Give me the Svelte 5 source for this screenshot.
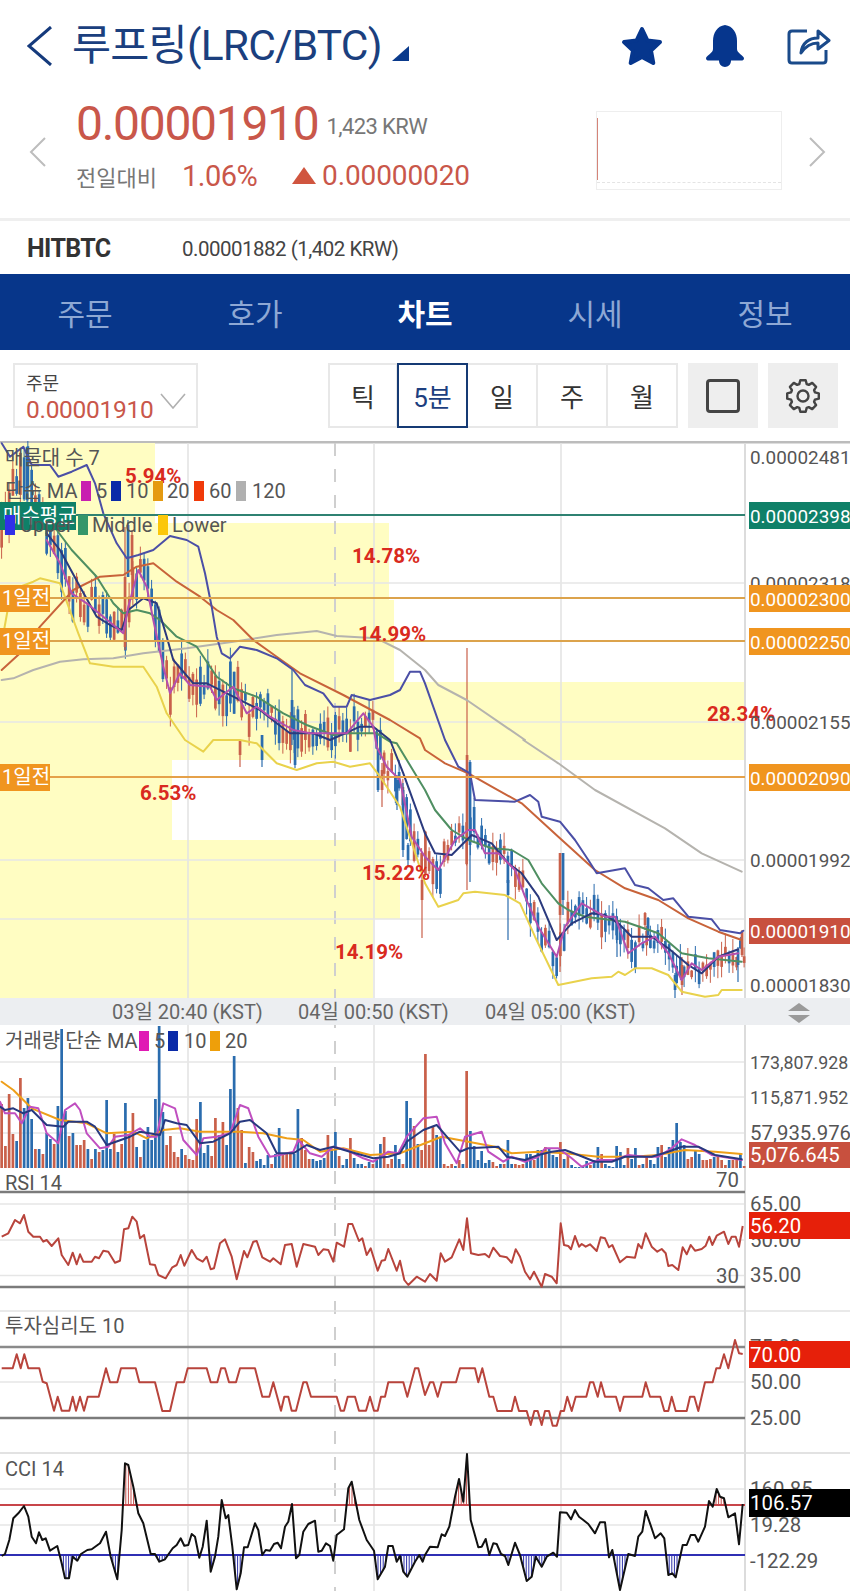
<script>
	const AXIS_X = 745;

	// line data is read off the chart in 3x crop units: flat x,y lists, crop origin ox,oy
	const pts = (arr, ox, oy) => {
		const out = [];
		for (let i = 0; i < arr.length; i += 2) out.push([ox + arr[i] / 3, oy + arr[i + 1] / 3]);
		return out;
	};
	const toD = (p) => p.map((q) => q[0].toFixed(1) + ',' + q[1].toFixed(1)).join(' ');
	const yAt = (p, x) => {
		if (x <= p[0][0]) return p[0][1];
		for (let i = 1; i < p.length; i++) {
			if (x <= p[i][0]) {
				const t = (x - p[i - 1][0]) / (p[i][0] - p[i - 1][0] || 1);
				return p[i - 1][1] + t * (p[i][1] - p[i - 1][1]);
			}
		}
		return p[p.length - 1][1];
	};

	const upper = [
		...pts([5,10,30,50,70,20,95,75,150,75,175,110,215,95,260,75,285,130,310,220,350,310,380,355,415,345,460,330,510,288,560,300,595,320,615,400,635,500,650,590,665,640,690,655,720,620,770,630,830,655,880,690,915,735,970,760,1000,800,1040,800,1055,765,1110,780,1170,765,1200,750,1230,695,1260,695,1275,730], 0, 440),
		...pts([60,0,100,80,135,100,150,180,270,185,315,165,340,185,350,230,405,245,450,300,490,360,515,400,600,385,630,435,670,445,715,480,745,475,790,530,860,538,885,570,945,580,955,572], 425, 740)
	];
	const ma60 = [
		...pts([5,690,60,640,120,560,220,450,300,410,370,405,410,380,460,370,530,425,600,470,650,510,700,540,760,600,830,650,900,700,1030,765,1170,840,1260,895], 0, 440),
		...pts([0,30,60,70,130,100,200,140,290,190,400,290,510,390,600,445,700,480,790,535,880,575,950,600], 425, 740)
	];
	const ma120 = [
		...pts([5,720,40,715,100,690,180,665,250,658,340,655,430,640,560,625,700,605,830,585,950,573,1010,588,1130,595,1200,630,1275,690,1315,735,1400,780,1575,900], 0, 440),
		...pts([295,0,400,70,510,150,720,265,830,340,950,395], 425, 740)
	];
	const middle = [
		...pts([110,220,170,270,215,330,290,410,340,490,370,520,410,510,450,520,480,540,530,590,590,620,650,710,700,745,770,770,850,820,920,855,1000,885,1050,880,1130,880,1170,905], 0, 440),
		...pts([1190,10,1275,150], 0, 740),
		...pts([30,210,80,270,130,300,200,325,260,330,310,360,350,430,400,490,430,510,480,530,600,545,700,580,770,640,850,655,950,665], 425, 740)
	];
	const lower = [
		...pts([5,610,30,470,60,440,100,425,120,415,180,430,235,580,270,670,340,680,430,680,470,740,500,820,555,900], 0, 440),
		...pts([610,35,640,0,720,0,770,10,830,70,890,90,950,70,1000,65,1050,80,1110,70,1140,110,1200,200,1275,430], 0, 740),
		...pts([40,500,100,480,115,460,150,455,240,465,285,490,330,590,400,735,500,715,560,710,580,695,600,705,630,685,680,685,730,705,770,755,840,770,880,765,890,750,950,750], 425, 740)
	];
	const ma10 = [
		...pts([140,280,180,330,240,440,290,530,330,555,365,570,385,510,430,475,470,490,500,590,520,660,580,730,620,730,640,740,700,770,740,790,780,810,830,850,870,880,940,880,990,900,1080,860,1120,860,1170,900], 0, 440),
		...pts([1210,100,1275,280], 0, 740),
		...pts([30,340,80,345,140,285,200,310,250,370,290,400,340,470,395,600,440,550,500,520,540,525,580,550,620,590,680,590,730,625,790,675,830,700,880,650,940,628], 425, 740)
	];
	const ma5 = [
		...pts([140,300,180,370,215,460,260,490,310,530,370,580,385,500,415,390,440,440,460,540,490,680,510,760,540,700,570,735,630,740,650,780,700,740,740,820,770,800,810,830,880,870,930,880,1040,880,1090,820,1120,860], 0, 440),
		...pts([1130,20,1160,80,1200,120,1235,290,1275,350], 0, 740),
		...pts([40,390,90,300,130,270,150,270,180,340,220,340,270,390,300,470,340,560,395,650,420,560,470,490,540,530,570,530,610,640,650,610,690,590,730,640,770,720,800,670,830,690,880,650,940,640], 425, 740)
	];
	const mainLines = [
		{ p: ma120, c: '#b5b3ae' },
		{ p: lower, c: '#e9d24c' },
		{ p: middle, c: '#4f8f62' },
		{ p: ma60, c: '#c8633a' },
		{ p: upper, c: '#4b4fa6' },
		{ p: ma10, c: '#2b3a7e' },
		{ p: ma5, c: '#b34fae' }
	];

	// volume per bar: positive is an up (red) bar, negative a down (blue) bar
	const vols = [64,22,74,34,-27,90,-60,-70,-49,19,-19,14,-35,-29,24,-62,-139,-57,32,-35,23,23,28,-19,9,-19,16,-18,-68,-19,34,-16,24,-65,34,55,-21,11,-28,-41,-28,-69,-142,-56,23,32,16,11,-19,13,9,8,49,-66,-15,-23,12,50,-33,46,-23,-79,-112,60,38,-5,21,16,-7,-9,-3,-13,4,-14,-40,14,14,14,-14,-59,30,18,9,-9,-7,-8,-10,33,-18,-36,12,-3,-9,30,-10,-4,-4,2,-6,4,-8,-24,31,4,9,-23,-9,4,-67,-50,42,-24,18,114,23,41,-33,-31,4,2,4,-2,8,-4,97,-37,-22,-8,-17,-5,-8,6,2,-4,4,-28,-4,4,3,4,-14,-14,8,-18,-18,21,-19,-13,-11,26,-9,13,-3,-1,-1,-1,-7,3,-8,-21,14,-4,-2,-1,-22,-16,-3,20,-9,-20,3,-4,11,-8,-4,-21,23,-11,-21,-28,-45,-26,-23,9,11,-17,-14,8,8,9,-11,13,8,3,-8,8,8,-14,2];
	const barX = (i) => 0.3 + i * 3.75;
	const UP = '#c9604a';
	const DOWN = '#2a6cae';

	const volLines = [
		{ c: '#ee9f1a', p: [...pts([5,185,40,210,95,265,180,300,260,310,320,340,400,335,440,355,490,330,540,325,600,335,720,335,790,340,860,355,910,360,960,395,1030,385,1110,405,1200,400,1275,370], 0, 1020), ...pts([50,350,130,365,210,380,260,400,340,395,420,400,520,410,620,410,700,405,780,390,870,395,950,402], 425, 1020)] },
		{ c: '#c04fc0', p: [...pts([0,245,15,280,45,280,65,310,90,260,115,265,140,340,175,370,195,270,225,250,240,270,260,340,300,385,325,380,345,350,385,345,420,325,450,350,470,350,490,250,525,265,550,360,590,405,610,355,650,350,690,340,720,255,745,265,775,350,810,410,840,405,880,395,895,360,930,400,965,410,1000,380,1040,390,1090,415,1120,425,1165,395,1195,400,1220,350,1270,295], 0, 1020), ...pts([35,290,60,370,95,430,120,350,170,335,190,395,235,425,260,410,300,425,340,410,360,385,400,385,440,415,470,440,520,420,570,420,610,405,660,410,700,410,740,385,770,358,810,375,860,405,950,420], 425, 1020)] },
		{ c: '#27397f', p: [...pts([0,260,15,270,40,265,70,280,95,270,140,315,190,320,205,305,260,305,285,320,320,375,390,350,420,335,480,345,495,300,530,310,560,315,600,370,640,365,690,340,720,305,750,300,800,340,830,400,880,400,920,375,960,390,1000,380,1050,395,1120,415,1165,410,1200,400,1220,365,1270,330], 0, 1020), ...pts([35,315,70,355,105,395,130,385,220,380,245,410,300,420,340,405,380,395,420,390,460,405,510,425,560,425,600,410,680,410,730,395,770,380,820,380,870,405,950,418], 425, 1020)] }
	];

	// candles: colour follows the volume bar, bodies sit around the short average
	let seed = 17;
	const rnd = () => {
		seed = (seed * 16807) % 2147483647;
		return seed / 2147483647;
	};
	const guide = [[0, 545], [12, 490], [27, 478], [46, 540], ...ma5];
	const candles = vols.map((v, i) => {
		const x = barX(i);
		const calm = x > 640 ? 0.7 : 1;
		const mid = yAt(guide, x) + (rnd() - 0.5) * 26 * calm;
		const h = Math.min(42, 5 + Math.abs(v) * 0.4 + rnd() * 14) * calm;
		return { x, top: mid - h / 2, h, wt: mid - h / 2 - rnd() * 14, wb: mid + h / 2 + rnd() * 14, c: v > 0 ? UP : DOWN };
	});
	// the long ones that stand out in the picture
	const bigCandles = [
		[125, 527, 650, 577, 647, UP], [128, 520, 577, 525, 577, DOWN], [132, 530, 600, 535, 575, UP], [27, 447, 510, 447, 500, DOWN],
		[292, 670, 745, 700, 730, DOWN], [467, 648, 890, 755, 830, UP], [470, 760, 882, 762, 845, DOWN], [560, 853, 972, 853, 915, UP],
		[563, 853, 915, 853, 900, DOWN], [422, 873, 938, 880, 900, UP], [508, 857, 940, 880, 895, DOWN], [378, 750, 792, 750, 790, DOWN],
		[382, 763, 807, 770, 790, UP], [397, 775, 810, 780, 805, DOWN], [403, 783, 857, 790, 850, DOWN], [408, 843, 867, 845, 860, DOWN],
		[240, 740, 767, 740, 755, UP], [262, 735, 767, 735, 760, DOWN], [295, 730, 768, 730, 765, DOWN], [738, 947, 982, 950, 965, DOWN],
		[742, 930, 957, 932, 955, UP], [675, 973, 998, 975, 990, DOWN], [682, 957, 995, 965, 985, UP], [617, 917, 957, 920, 940, DOWN],
		[645, 912, 930, 913, 925, UP], [648, 917, 937, 918, 935, DOWN]
	];

	const rsi = [
		...pts([5,650,25,640,45,600,60,610,72,585,85,635,100,650,120,650,130,665,140,660,155,678,175,655,185,705,205,735,218,698,230,733,240,703,250,725,275,725,285,710,297,715,310,692,325,695,345,728,360,722,372,628,385,625,397,590,410,605,420,655,432,645,450,733,465,735,475,765,497,775,517,742,530,735,542,705,553,737,575,690,590,715,608,725,620,710,632,748,642,745,660,670,675,658,695,710,710,778,720,740,732,693,742,712,760,665,770,663,787,712,810,725,820,715,842,733,855,675,875,672,890,740,910,672,945,680,955,705,970,688,985,690,1000,725,1010,668,1032,680,1045,612,1057,612,1077,663,1087,655,1100,705,1112,685,1133,752,1145,722,1155,720,1165,687,1190,752,1200,722,1213,780,1225,795,1250,770,1275,785], 0, 1020),
		...pts([15,762,35,782,47,700,60,725,80,712,103,658,115,690,126,595,138,700,160,705,180,702,192,712,205,683,225,708,245,712,260,728,272,688,285,710,300,755,315,778,327,755,350,800,360,762,380,770,395,790,407,610,417,675,430,678,438,688,450,648,462,680,470,672,482,680,495,673,515,693,527,652,540,655,552,682,562,675,585,727,605,710,630,713,640,672,650,685,662,640,680,680,697,695,710,687,722,700,730,738,742,735,760,750,773,682,785,703,797,675,810,692,830,687,842,677,853,650,862,675,875,647,897,635,910,672,920,650,932,650,942,680,953,618], 425, 1020)
	];
	const psych = [
		...pts([5,205,38,205,50,163,62,205,73,163,85,205,118,205,128,245,140,250,162,332,173,290,185,332,208,332,218,290,228,332,240,290,252,332,263,290,296,290,318,205,330,247,352,247,363,205,407,205,418,247,465,247,487,333,510,333,530,247,552,247,563,205,620,205,632,247,652,247,663,205,675,205,687,247,708,247,720,205,765,205,787,290,808,290,820,247,843,332,853,290,865,290,875,332,888,332,910,247,920,247,933,290,1010,290,1022,332,1032,332,1043,290,1065,290,1077,332,1098,332,1110,290,1122,332,1133,332,1143,290,1155,290,1165,247,1210,247,1222,290,1245,205,1255,205,1275,285], 0, 1300),
		...pts([15,247,25,247,38,290,50,247,93,247,105,205,150,205,160,247,172,205,193,290,205,290,217,333,260,333,270,290,282,333,305,333,317,375,328,333,338,333,350,375,360,333,372,333,383,377,395,377,407,333,417,333,427,290,440,333,452,290,484,290,495,247,505,247,518,290,528,247,540,290,573,290,585,333,596,290,652,290,662,247,675,290,706,290,718,333,730,333,740,290,752,333,785,333,795,290,808,290,820,333,840,247,863,247,874,205,885,205,897,163,910,205,930,120,942,160,953,162], 425, 1300)
	];
	const cci = [
		...pts([5,768,15,762,28,720,40,655,55,640,72,618,85,650,95,710,108,730,117,697,127,720,137,715,150,752,172,738,185,790,195,835,207,835,218,770,232,782,243,762,262,750,275,748,300,730,318,695,332,770,352,838,365,690,375,490,385,495,400,560,415,640,430,670,452,762,465,762,478,785,495,778,518,745,530,735,542,715,553,737,565,735,575,702,585,710,598,773,608,740,620,662,632,815,645,770,655,710,665,600,677,655,685,645,697,740,710,868,722,820,732,742,743,742,765,670,775,690,787,765,797,750,810,752,822,732,833,728,843,745,855,680,865,665,876,612,888,775,898,765,910,695,925,672,945,662,955,755,965,752,978,730,990,738,1000,782,1010,705,1032,688,1045,565,1055,545,1065,595,1078,660,1100,720,1122,752,1133,838,1155,800,1165,738,1178,738,1190,785,1200,768,1210,815,1222,830,1245,785,1258,765,1268,785,1275,765], 0, 1300),
		...pts([15,740,38,742,50,703,60,708,73,680,90,590,102,537,115,605,126,462,137,660,160,742,170,740,182,717,193,765,205,730,215,732,228,762,240,768,250,795,270,728,285,765,305,843,320,830,332,770,350,800,365,770,385,758,396,770,405,637,425,638,438,658,450,630,462,650,475,660,490,672,510,700,525,667,540,667,552,772,562,750,585,870,610,762,630,768,640,710,652,695,662,633,675,670,690,715,707,700,718,715,730,825,742,820,752,832,773,735,785,735,797,705,810,705,820,725,840,680,852,603,863,620,875,567,885,590,897,595,910,652,930,640,942,733,953,612], 425, 1300)
	];
	const CCI_HI = 1505;
	const CCI_LO = 1555;
	const hatch = [];
	for (let x = 1; x < 744; x += 2.6) {
		const y = yAt(cci, x);
		if (y < CCI_HI) hatch.push({ x, y, to: CCI_HI, c: '#c4504c' });
		if (y > CCI_LO) hatch.push({ x, y, to: CCI_LO, c: '#2b2fa8' });
	}

	const bands = [
		[0, 443, 155, 80], [0, 523, 389, 77], [0, 600, 394, 82], [0, 682, 745, 78],
		[0, 760, 172, 80], [0, 840, 400, 79], [0, 919, 373, 79]
	];
	const grid = [583, 722, 860, 919, 1062, 1097, 1133, 1204, 1240, 1275.5, 1382, 1489, 1525];
	const verticals = [188, 374, 561];
	const percents = [
		['5.94%', 125, 483], ['14.78%', 352, 563], ['14.99%', 358, 641], ['28.34%', 707, 721],
		['6.53%', 140, 800], ['15.22%', 362, 880], ['14.19%', 335, 959]
	];
	// price labels fill the axis width; the long volume figures have to run smaller
	const axisLabels = [
		['0.00002481', 464, 'px'], ['0.00002318', 590, 'px'], ['0.00002155', 729, 'px'], ['0.00001992', 867, 'px'], ['0.00001830', 992, 'px'],
		['173,807.928', 1069, 'long'], ['115,871.952', 1104, 'long'], ['57,935.976', 1140, ''], ['65.00', 1211, ''], ['50.00', 1247, ''], ['35.00', 1282, ''],
		['75.00', 1354, ''], ['50.00', 1389, ''], ['25.00', 1425, ''], ['160.85', 1496, ''], ['19.28', 1532, ''], ['-122.29', 1568, '']
	];
	const tags = [
		['0.00002398', 502, 27, '#0f8068', 'px'], ['0.00002300', 585, 27, '#f0951f', 'px'], ['0.00002250', 628, 27, '#f0951f', 'px'],
		['0.00002090', 764, 27, '#f0951f', 'px'], ['0.00001910', 918, 26, '#c8503e', 'px'], ['5,076.645', 1142, 26, '#c8503e', ''],
		['56.20', 1212, 27, '#e6200a', ''], ['70.00', 1341, 27, '#e6200a', ''], ['106.57', 1489, 28, '#000', '']
	];
	const timeLabels = [['03일 20:40 (KST)', 112], ['04일 00:50 (KST)', 298], ['04일 05:00 (KST)', 485]];
	const swatches = [
		[81, 481, '#c81fb0'], [111, 481, '#0a2aa8'], [153, 481, '#e59a10'], [194, 481, '#f03a0a'], [236, 481, '#b0b0b0'],
		[5, 515, '#3030e8'], [78, 515, '#35966a'], [158, 515, '#fbc70a'],
		[139, 1031, '#e01ab4'], [168, 1031, '#0a2aa8'], [210, 1031, '#ee9f0a']
	];
	const legend = [
		['매물대 수 7', 5, 465], ['단순 MA', 5, 498], ['5', 96, 498], ['10', 126, 498], ['20', 167, 498], ['60', 209, 498], ['120', 252, 498],
		['Upper', 20, 532], ['Middle', 92, 532], ['Lower', 172, 532],
		['거래량 단순 MA', 5, 1048], ['5', 154, 1048], ['10', 184, 1048], ['20', 225, 1048],
		['RSI 14', 5, 1190], ['투자심리도 10', 5, 1333], ['CCI 14', 5, 1476]
	];

	const gearPath = (() => {
		const cx = 803.5;
		const cy = 396;
		let d = '';
		for (let i = 0; i < 8; i++) {
			const a = (i * Math.PI) / 4;
			const step = [[-0.3, 12.5], [-0.17, 16], [0.17, 16], [0.3, 12.5]];
			for (const [o, r] of step) {
				d += (d ? 'L' : 'M') + (cx + r * Math.sin(a + o)).toFixed(1) + ' ' + (cy - r * Math.cos(a + o)).toFixed(1);
			}
		}
		return d + 'Z';
	})();
</script>

<div class="page">
	<header class="top">
		<svg class="back" width="26" height="40" viewBox="0 0 26 40"><path d="M24 1 L2 20 L24 39" /></svg>
		<h1>루프링(LRC/BTC)</h1>
		<svg class="caret" width="17" height="15" viewBox="0 0 17 15"><path d="M17 0 V15 H0 Z" /></svg>
		<svg class="star" width="44" height="42" viewBox="0 0 44 42"><path d="M22 4 L27.5 15.5 L40 17 L31 25.5 L33.3 38 L22 32 L10.7 38 L13 25.5 L4 17 L16.5 15.5 Z" /></svg>
		<svg class="bell" width="40" height="42" viewBox="0 0 40 42"><path d="M20 0 C12 1 8 8 8 16 L8 24 C8 28 2 30 1 33 C1 35 2 35.5 4 35.5 L14 35.5 C14 44 26 44 26 35.5 L36 35.5 C38 35.5 39 35 39 33 C38 30 32 28 32 24 L32 16 C32 8 28 1 20 0 Z" /></svg>
		<svg class="share" width="44" height="40" viewBox="0 0 44 40"><path d="M20 5 H5 Q2 5 2 8 V34 Q2 37 5 37 H36 Q39 37 39 34 V24 M14 27 C15 17 22 12 31 12 V5 L42 14.5 L31 23 V17 C23 17 18 21 14 27 Z" /></svg>
	</header>

	<section class="quote">
		<svg class="nav" width="18" height="30" viewBox="0 0 18 30"><path d="M16 1 L2 15 L16 29" /></svg>
		<div class="prices">
			<div class="row-main"><span class="price">0.00001910</span><span class="krw">1,423 KRW</span></div>
			<div class="row-sub">
				<span class="vs">전일대비</span>
				<span class="rate">1.06%</span>
				<span class="tri"></span>
				<span class="diff">0.00000020</span>
			</div>
		</div>
		<div class="mini"><span class="mini-bar"></span><span class="mini-dash"></span></div>
		<svg class="nav" width="18" height="30" viewBox="0 0 18 30"><path d="M2 1 L16 15 L2 29" /></svg>
	</section>

	<section class="exchange">
		<span class="ex-name">HITBTC</span>
		<span class="ex-val">0.00001882 (1,402 KRW)</span>
	</section>

	<nav class="tabs">
		<span>주문</span>
		<span>호가</span>
		<span class="on">차트</span>
		<span>시세</span>
		<span>정보</span>
	</nav>

	<section class="tools">
		<div class="picker">
			<div>
				<div class="pick-label">주문</div>
				<div class="pick-val">0.00001910</div>
			</div>
			<svg width="26" height="16" viewBox="0 0 26 16"><path d="M1 1 L13 15 L25 1" /></svg>
		</div>
		<div class="seg">
			<span>틱</span>
			<span class="sel">5분</span>
			<span>일</span>
			<span>주</span>
			<span>월</span>
		</div>
		<div class="tool"><span class="sq"></span></div>
		<div class="tool">
			<svg width="40" height="40" viewBox="783.5 376 40 40"><path d={gearPath} /><circle cx="803.5" cy="396" r="5.5" /></svg>
		</div>
	</section>

	<svg class="chart" width="850" height="1150" viewBox="0 441 850 1150">
		<rect x="0" y="441" width="850" height="2.5" fill="#bcbcbc" />

		{#each bands as b}
			<rect x={b[0]} y={b[1]} width={b[2]} height={b[3]} fill="#fffdc2" />
		{/each}

		{#each verticals as x}
			<line x1={x} x2={x} y1="443" y2="1591" stroke="#e2e2e2" stroke-width="1.5" />
		{/each}
		<line x1="335" x2="335" y1="443" y2="1591" stroke="#cfcfcf" stroke-width="2" stroke-dasharray="13 13" />
		{#each grid as y}
			<line x1="0" x2={AXIS_X} y1={y} y2={y} stroke="#e6e6e6" stroke-width="1.5" />
		{/each}
		<line x1="0" x2="850" y1="1311" y2="1311" stroke="#e2e2e2" stroke-width="1.5" />
		<line x1="0" x2="850" y1="1453" y2="1453" stroke="#d8d8d8" stroke-width="1.5" />
		<line x1={AXIS_X} x2={AXIS_X} y1="443" y2="1591" stroke="#dcdcdc" stroke-width="2" />

		{#each candles as k}
			<line x1={k.x + 1.3} x2={k.x + 1.3} y1={k.wt} y2={k.wb} stroke={k.c} stroke-width="1" />
			<rect x={k.x} y={k.top} width="2.7" height={k.h} fill={k.c} />
		{/each}
		{#each bigCandles as k}
			<line x1={k[0]} x2={k[0]} y1={k[1]} y2={k[2]} stroke={k[5]} stroke-width="1.2" />
			<rect x={k[0] - 1.3} y={k[3]} width="2.7" height={k[4] - k[3]} fill={k[5]} />
		{/each}

		{#each mainLines as l}
			<polyline points={toD(l.p)} fill="none" stroke={l.c} stroke-width="2" stroke-linejoin="round" stroke-linecap="round" />
		{/each}

		<line x1="0" x2={AXIS_X} y1="515" y2="515" stroke="#2f8272" stroke-width="1.8" />
		<line x1="0" x2={AXIS_X} y1="598" y2="598" stroke="#dca34c" stroke-width="2" />
		<line x1="0" x2={AXIS_X} y1="641" y2="641" stroke="#dca34c" stroke-width="2" />
		<line x1="0" x2={AXIS_X} y1="777" y2="777" stroke="#e5a14a" stroke-width="2" />

		<rect x="0" y="998" width="850" height="27" fill="#eceef1" />
		{#each timeLabels as t}
			<text class="time" x={t[1]} y="1019">{t[0]}</text>
		{/each}
		<path d="M788 1011 L799 1003 L810 1011 Z" fill="#9a9a9a" />
		<path d="M788 1015 L810 1015 L799 1023 Z" fill="#9a9a9a" />

		{#each vols as v, i}
			<rect x={barX(i)} y={1168 - Math.abs(v)} width="2.7" height={Math.abs(v)} fill={v > 0 ? UP : DOWN} />
		{/each}
		{#each volLines as l}
			<polyline points={toD(l.p)} fill="none" stroke={l.c} stroke-width="2" stroke-linejoin="round" stroke-linecap="round" />
		{/each}

		<line x1="0" x2={AXIS_X} y1="1192" y2="1192" stroke="#7b7b7b" stroke-width="2.4" />
		<line x1="0" x2={AXIS_X} y1="1287" y2="1287" stroke="#7b7b7b" stroke-width="2.4" />
		<polyline points={toD(rsi)} fill="none" stroke="#b8443c" stroke-width="2" stroke-linejoin="round" />

		<line x1="0" x2={AXIS_X} y1="1347" y2="1347" stroke="#8a8a8a" stroke-width="2.4" />
		<line x1="0" x2={AXIS_X} y1="1418" y2="1418" stroke="#7b7b7b" stroke-width="2.4" />
		<polyline points={toD(psych)} fill="none" stroke="#b8443c" stroke-width="2" stroke-linejoin="round" />

		{#each hatch as h}
			<line x1={h.x} x2={h.x} y1={h.y} y2={h.to} stroke={h.c} stroke-width="1" />
		{/each}
		<line x1="0" x2={AXIS_X} y1={CCI_HI} y2={CCI_HI} stroke="#c8454a" stroke-width="1.8" />
		<line x1="0" x2={AXIS_X} y1={CCI_LO} y2={CCI_LO} stroke="#2f2fb4" stroke-width="1.8" />
		<polyline points={toD(cci)} fill="none" stroke="#111" stroke-width="2" stroke-linejoin="round" />

		{#each percents as p}
			<text class="pct" x={p[1]} y={p[2]}>{p[0]}</text>
		{/each}

		{#each axisLabels as a}
			<text class="axis {a[2]}" x="750" y={a[1]}>{a[0]}</text>
		{/each}
		<text class="axis" x="716" y="1187">70</text>
		<text class="axis" x="716" y="1283">30</text>

		{#each tags as t}
			<rect x="749" y={t[1]} width="101" height={t[2]} fill={t[3]} />
			<text class="axis tag {t[4]}" x="750" y={t[1] + t[2] / 2 + 7}>{t[0]}</text>
		{/each}

		<rect x="0" y="502" width="76" height="28" fill="#0f8068" />
		<text class="left-tag" x="3" y="523">매수평균</text>
		{#each [585, 628, 764] as y}
			<rect x="0" y={y} width="50" height="27" fill="#f0951f" />
			<text class="left-tag" x="2" y={y + 20}>1일전</text>
		{/each}

		{#each swatches as s}
			<rect x={s[0]} y={s[1]} width="10" height="20" fill={s[2]} />
		{/each}
		{#each legend as l}
			<text class="legend" x={l[1]} y={l[2]}>{l[0]}</text>
		{/each}
	</svg>
</div>

<style>
	:global(body) {
		margin: 0;
		background: #fff;
	}
	.page {
		width: 850px;
		height: 1591px;
		overflow: hidden;
		font-family: Roboto, 'Noto Sans CJK KR', sans-serif;
		color: #333;
	}
	.top {
		height: 92px;
		display: flex;
		align-items: center;
		padding-left: 27px;
		box-sizing: border-box;
	}
	.back {
		fill: none;
		stroke: #153a7c;
		stroke-width: 3;
		margin-right: 19px;
	}
	h1 {
		margin: 0;
		font-size: 42.5px;
		font-weight: 400;
		letter-spacing: -0.8px;
		color: #1b3f7e;
		line-height: 1;
		width: 320px;
		white-space: nowrap;
	}
	.caret {
		fill: #0a3a8c;
		margin-top: 14px;
	}
	.star {
		fill: #06368d;
		stroke: #06368d;
		stroke-width: 4;
		stroke-linejoin: round;
		margin-left: 211px;
	}
	.bell {
		fill: #06368d;
		margin-left: 41px;
	}
	.share {
		fill: none;
		stroke: #1a4a8a;
		stroke-width: 3;
		stroke-linejoin: round;
		margin-left: 42px;
	}
	.quote {
		height: 126px;
		display: flex;
		align-items: center;
		padding-left: 29px;
		box-sizing: border-box;
	}
	.nav {
		fill: none;
		stroke: #bdbdbd;
		stroke-width: 2;
		flex: none;
		margin-top: -6px;
	}
	.prices {
		width: 502px;
		margin-left: 29px;
		margin-top: -12px;
	}
	.row-main {
		display: flex;
		align-items: baseline;
		height: 60px;
		margin-top: -8px;
	}
	.price {
		font-size: 48px;
		letter-spacing: -1.3px;
		color: #c9574a;
	}
	.krw {
		font-size: 22px;
		letter-spacing: -0.6px;
		color: #777;
		margin-left: 8px;
		position: relative;
		top: -6px;
	}
	.row-sub {
		display: flex;
		align-items: center;
		height: 40px;
		margin-top: 1px;
	}
	.vs {
		font-size: 22px;
		color: #777;
		width: 106px;
	}
	.rate {
		font-size: 29px;
		letter-spacing: -0.5px;
		color: #c9574a;
		width: 110px;
	}
	.tri {
		width: 0;
		height: 0;
		border-left: 12px solid transparent;
		border-right: 12px solid transparent;
		border-bottom: 17px solid #d0553f;
		margin-right: 6px;
	}
	.diff {
		font-size: 28px;
		letter-spacing: -0.1px;
		color: #c9574a;
	}
	.mini {
		width: 186px;
		height: 79px;
		box-sizing: border-box;
		border: 1px solid #eee;
		margin: -10px 26px 0 18px;
		position: relative;
	}
	.mini-bar {
		position: absolute;
		left: 0;
		top: 6px;
		height: 62px;
		width: 1px;
		background: #d58478;
	}
	.mini-dash {
		position: absolute;
		left: 0;
		right: 0;
		top: 70px;
		border-top: 1px dashed #e4e4e4;
	}
	.exchange {
		height: 56px;
		border-top: 3px solid #efefef;
		box-sizing: border-box;
		display: flex;
		align-items: center;
		padding: 2px 0 0 27px;
	}
	.ex-name {
		width: 155px;
		font-size: 25px;
		font-weight: 700;
		letter-spacing: -0.6px;
		color: #333;
	}
	.ex-val {
		font-size: 20.5px;
		letter-spacing: -0.5px;
		color: #444;
	}
	.tabs {
		height: 76px;
		box-sizing: border-box;
		padding-top: 6px;
		background: #07368a;
		display: grid;
		grid-template-columns: repeat(5, 1fr);
		align-items: center;
		text-align: center;
		font-size: 30px;
		line-height: 1;
		color: #8ea8d4;
	}
	.tabs .on {
		color: #fff;
		font-weight: 700;
	}
	.tools {
		height: 91px;
		display: flex;
		align-items: flex-start;
		padding: 13px 0 0 13px;
		box-sizing: border-box;
	}
	.picker {
		width: 185px;
		height: 65px;
		box-sizing: border-box;
		border: 2px solid #e8e8e8;
		display: flex;
		justify-content: space-between;
		padding: 7px 10px 0 11px;
	}
	.picker svg {
		fill: none;
		stroke: #b0b0b0;
		stroke-width: 1.6;
		margin-top: 21px;
	}
	.pick-label {
		font-size: 18px;
		line-height: 24px;
		color: #444;
	}
	.pick-val {
		font-size: 24.5px;
		line-height: 28px;
		letter-spacing: -0.3px;
		color: #c9574a;
		white-space: nowrap;
	}
	.seg {
		display: grid;
		grid-template-columns: repeat(5, 70px);
		margin-left: 130px;
		height: 65px;
		width: 350px;
		box-sizing: border-box;
		font-size: 26px;
		color: #333;
	}
	.seg span {
		display: flex;
		align-items: center;
		justify-content: center;
		border: 2px solid #e8e8e8;
		border-left-width: 0;
		box-sizing: border-box;
	}
	.seg span:first-child {
		border-left-width: 2px;
	}
	.seg .sel {
		border: 2px solid #153a74;
		color: #1d3f80;
		margin-left: -1px;
	}
	.tool {
		width: 70px;
		height: 65px;
		background: #eee;
		margin-left: 10px;
		display: flex;
		align-items: center;
		justify-content: center;
	}
	.sq {
		width: 34px;
		height: 34px;
		box-sizing: border-box;
		border: 3px solid #444;
		border-radius: 4px;
	}
	.tool svg {
		fill: none;
		stroke: #444;
		stroke-width: 2.4;
		stroke-linejoin: round;
	}
	.chart {
		display: block;
	}
	.chart text {
		font-family: Roboto, 'Noto Sans CJK KR', sans-serif;
	}
	.legend {
		font-size: 20px;
		fill: #555;
	}
	.axis {
		font-size: 20.4px;
		fill: #555;
	}
	.axis.px {
		font-size: 18.9px;
	}
	.axis.long {
		font-size: 17.8px;
	}
	.axis.tag {
		fill: #fff;
	}
	.time {
		font-size: 20px;
		fill: #666;
	}
	.pct {
		font-size: 20.5px;
		font-weight: 700;
		fill: #d92a20;
	}
	.left-tag {
		font-size: 20px;
		fill: #fff;
	}
</style>
